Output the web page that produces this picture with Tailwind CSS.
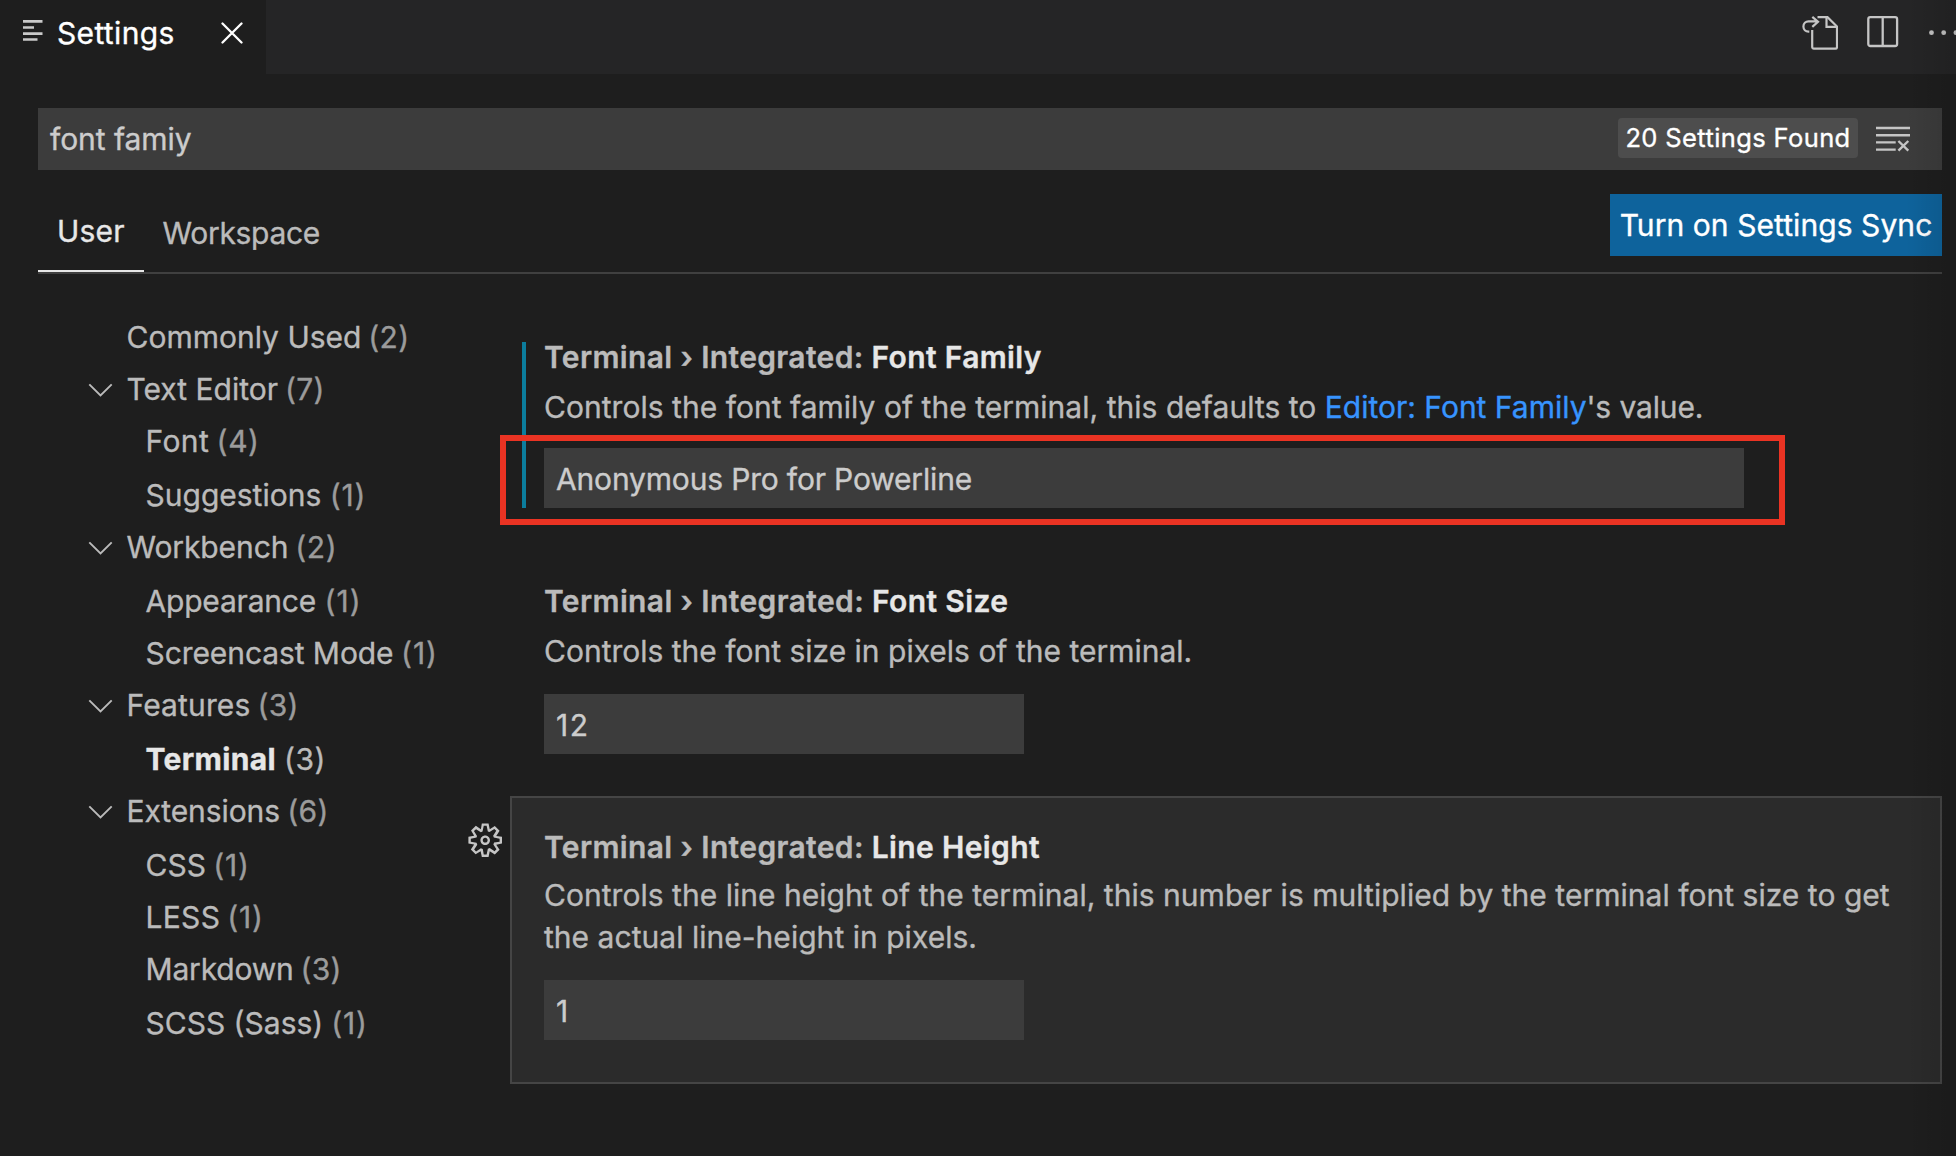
<!DOCTYPE html>
<html lang="en">
<head>
<meta charset="utf-8">
<title>Settings</title>
<script src="https://cdn.jsdelivr.net/npm/@tailwindcss/browser@4"></script>
</head>
<body class="relative flex h-[1156px] w-[1956px] flex-col overflow-hidden bg-[#1e1e1e] font-['Inter',sans-serif] text-[30px] leading-[42px] text-[#bbbbbb] [-webkit-text-stroke:0.35px]">

  <!-- Tab bar -->
  <header class="flex h-[74px] shrink-0 bg-[#252526]">
    <div class="flex h-full w-[266px] items-start bg-[#1e1e1e] text-white">
      <svg class="mt-[20px] ml-[23px] h-[22px] w-[20px] shrink-0" viewBox="0 0 20 22" fill="#c9c9c9"><path d="M0 0h19.5v2.8H0zM0 6.2h11v2.6H0zM0 12.2h19.5V15H0zM0 18.2h14.5v2.6H0z"/></svg>
      <span class="ml-[14px] leading-[66px] tracking-[0.35px]">Settings</span>
      <svg class="mt-[22px] ml-[46.5px] h-[22px] w-[22px]" viewBox="0 0 22 22" fill="none" stroke="#fff" stroke-width="2.3" stroke-linecap="round"><path d="M1.500 1.500l19 19M20.500 1.500l-19 19"/></svg>
    </div>
    <div class="flex flex-1 justify-end">
      <svg class="mt-[14px] h-[38px] w-[38px]" viewBox="0 0 38 38" fill="none" stroke="#c5c5c5" stroke-width="2.2"><path d="M17.500 3.200H27.500L37 12.500V33a1.700 1.700 0 0 1-1.700 1.700H13.900a1.700 1.700 0 0 1-1.700-1.700V16"/><path d="M26.500 3.200V12.800H37"/><path d="M9.300 17.600H8.500a5.100 5.100 0 0 1 0-10.200H17.500M12.300 2.800l5.700 4.900-5.700 5.200"/></svg>
      <svg class="mt-[15px] ml-[28px] h-[34px] w-[34px]" viewBox="0 0 34 34" fill="none" stroke="#c5c5c5" stroke-width="2.3"><rect x="2.300" y="2.200" width="28.800" height="28.800" rx="2"/><path d="M16.700 2v29"/></svg>
      <svg class="mt-[28px] ml-[28px] h-[10px] w-[28px]" viewBox="0 0 28 10" fill="#c5c5c5"><circle cx="3.500" cy="4.700" r="2.400"/><circle cx="15.700" cy="4.700" r="2.400"/><circle cx="27.900" cy="4.700" r="2.400"/></svg>
    </div>
  </header>

  <!-- Search box -->
  <div class="mt-[34px] mr-[14px] ml-[38px] flex h-[62px] shrink-0 items-center bg-[#3c3c3c] pl-[12px] text-[#cccccc]">
    <span class="flex-1 tracking-[-0.05px]">font famiy</span>
    <span class="mb-[2px] flex h-[40px] w-[240px] items-center justify-center rounded bg-[#4d4d4d] text-[25.5px] leading-[40px] tracking-[0.38px] text-white">20 Settings Found</span>
    <svg class="mr-[32px] ml-[18px] h-[26px] w-[34px]" viewBox="0 0 34 26" fill="none" stroke="#c5c5c5" stroke-width="2.400"><path d="M0 2h34M0 9.200h34M0 16.400h19.700M0 23.600h19.700M22.400 15l9.900 9.600M32.300 15l-9.900 9.600"/></svg>
  </div>

  <!-- Scope tabs -->
  <div class="mr-[14px] ml-[38px] flex h-[104px] shrink-0 items-start border-b-2 border-[#404040]">
    <div class="h-full w-[106px] border-b-2 border-[#e7e7e7] pt-[40px] pl-[19px] tracking-[0.2px] text-[#e7e7e7]">User</div>
    <div class="flex-1 pt-[42px] pl-[18.5px] tracking-[-0.3px]">Workspace</div>
    <button class="mt-[24px] h-[62px] w-[332px] bg-[#0e639c] text-center tracking-[0.07px] text-white">Turn on Settings Sync</button>
  </div>

  <main class="flex min-h-0 flex-1">
    <!-- Category tree -->
    <nav class="w-[510px] shrink-0 pt-[37px] pl-[88px] leading-[52px]">
      <div class="h-[52px] pl-[38.5px]">Commonly Used <span class="-ml-[1.5px] tracking-[0.3px] text-[#9b9b9b]">(2)</span></div>
      <div class="flex h-[52px]"><svg class="mt-[20px] mr-[13.5px] h-[14px] w-[25px]" viewBox="0 0 25 14" fill="none" stroke="#bbb" stroke-width="1.900"><path d="M1.300 1.300l11.200 11.200L23.700 1.300"/></svg><span>Text Editor <span class="-ml-[1.5px] tracking-[0.3px] text-[#9b9b9b]">(7)</span></span></div>
      <div class="h-[54px] pl-[57.5px]"><span class="tracking-[0.4px]">Font</span> <span class="-ml-px tracking-[0.6px] text-[#9b9b9b]">(4)</span></div>
      <div class="h-[52px] pl-[57.5px]">Suggestions <span class="tracking-[0.8px] text-[#9b9b9b]">(1)</span></div>
      <div class="flex h-[54px]"><svg class="mt-[20px] mr-[13.5px] h-[14px] w-[25px]" viewBox="0 0 25 14" fill="none" stroke="#bbb" stroke-width="1.900"><path d="M1.300 1.300l11.200 11.200L23.700 1.300"/></svg><span><span class="tracking-[-0.1px]">Workbench</span> <span class="-ml-[1.5px] tracking-[0.6px] text-[#9b9b9b]">(2)</span></span></div>
      <div class="h-[52px] pl-[57.5px]"><span class="tracking-[-0.2px]">Appearance</span> <span class="tracking-[1px] text-[#9b9b9b]">(1)</span></div>
      <div class="h-[52px] pl-[57.5px]"><span class="tracking-[-0.08px]">Screencast Mode</span> <span class="-ml-px tracking-[1px] text-[#9b9b9b]">(1)</span></div>
      <div class="flex h-[54px]"><svg class="mt-[20px] mr-[13.5px] h-[14px] w-[25px]" viewBox="0 0 25 14" fill="none" stroke="#bbb" stroke-width="1.900"><path d="M1.300 1.300l11.200 11.200L23.700 1.300"/></svg><span><span class="tracking-[0.14px]">Features</span> <span class="-ml-[1.5px] tracking-[0.3px] text-[#9b9b9b]">(3)</span></span></div>
      <div class="h-[52px] pl-[57.5px]"><span class="font-bold tracking-[0.34px] text-[#e7e7e7]">Terminal</span> <span class="-ml-[0.5px] tracking-[0.6px] text-[#bbbbbb]">(3)</span></div>
      <div class="flex h-[54px]"><svg class="mt-[20px] mr-[13.5px] h-[14px] w-[25px]" viewBox="0 0 25 14" fill="none" stroke="#bbb" stroke-width="1.900"><path d="M1.300 1.300l11.200 11.200L23.700 1.300"/></svg><span><span class="tracking-[-0.1px]">Extensions</span> <span class="-ml-px tracking-[0.3px] text-[#9b9b9b]">(6)</span></span></div>
      <div class="h-[52px] pl-[57.5px]">CSS <span class="-ml-px tracking-[0.8px] text-[#9b9b9b]">(1)</span></div>
      <div class="h-[52px] pl-[57.5px]"><span class="tracking-[0.3px]">LESS</span> <span class="-ml-[1.5px] tracking-[0.8px] text-[#9b9b9b]">(1)</span></div>
      <div class="h-[54px] pl-[57.5px]"><span class="tracking-[-0.19px]">Markdown</span> <span class="-ml-[1.5px] tracking-[0.3px] text-[#9b9b9b]">(3)</span></div>
      <div class="h-[52px] pl-[57.5px]">SCSS (Sass) <span class="-ml-[0.5px] tracking-[0.8px] text-[#9b9b9b]">(1)</span></div>
    </nav>

    <!-- Settings list -->
    <div class="mr-[14px] flex flex-1 flex-col pt-[62px]">
      <section class="relative pl-[34px]">
        <div class="absolute top-[6px] bottom-0 left-[12px] w-[4px] bg-[#0c7d9d]"></div>
        <h3 class="font-semibold tracking-[0.35px]">Terminal › Integrated: <span class="text-[#e7e7e7]">Font Family</span></h3>
        <p class="mt-[8px]"><span class="tracking-[0.03px]">Controls the font family of the terminal, this defaults to </span><a class="text-[#3794ff]">Editor: Font Family</a><span class="tracking-[-0.12px]">'s value.</span></p>
        <div class="mt-[20px] h-[60px] w-[1200px] bg-[#3c3c3c] pl-[12px] leading-[62px] tracking-[-0.17px] text-[#cccccc]">Anonymous Pro for Powerline</div>
        <!-- Annotation frame around the value -->
        <div class="absolute top-[99px] left-[-10px] h-[90px] w-[1285px] border-[6px] border-[#ea3323]"></div>
      </section>

      <section class="mt-[72px] pl-[34px]">
        <h3 class="font-semibold tracking-[0.37px]">Terminal › Integrated: <span class="text-[#e7e7e7]">Font Size</span></h3>
        <p class="mt-[8px]">Controls the font size in pixels of the terminal.</p>
        <div class="mt-[22px] h-[60px] w-[480px] bg-[#3c3c3c] pl-[12px] leading-[62px] tracking-[1.5px] text-[#cccccc]">12</div>
      </section>

      <section class="relative mt-[42px] h-[288px] border-2 border-[#454545] bg-[#2b2b2b] pt-[28px] pl-[32px]">
        <svg class="absolute top-[23px] left-[-46.5px] h-[38.400px] w-[38.400px]" viewBox="0 0 16 16" fill="#c5c5c5" fill-rule="evenodd"><path d="M9.100 4.400L8.600 2H7.400l-.5 2.400-.7.300-2-1.300-.9.800 1.300 2-.2.700-2.400.5v1.200l2.400.5.300.8-1.300 2 .8.800 2-1.300.8.300.4 2.300h1.200l.5-2.400.8-.3 2 1.300.8-.8-1.300-2 .3-.8 2.300-.4V7.400l-2.400-.5-.3-.8 1.300-2-.8-.8-2 1.300-.7-.2zM9.400 1l.5 2.400L12 2.100l2 2-1.400 2.100 2.400.4v2.800l-2.400.5L14 12l-2 2-2.100-1.400-.5 2.400H6.600l-.5-2.400L4 13.900l-2-2 1.400-2.100L1 9.400V6.600l2.400-.5L2.100 4l2-2 2.100 1.400.4-2.400h2.800zm.6 7c0 1.100-.9 2-2 2s-2-.9-2-2 .9-2 2-2 2 .9 2 2zM8 9c.6 0 1-.4 1-1s-.4-1-1-1-1 .4-1 1 .4 1 1 1z"/></svg>
        <h3 class="font-semibold tracking-[0.36px]">Terminal › Integrated: <span class="text-[#e7e7e7]">Line Height</span></h3>
        <p class="mt-[6px] w-[1360px] tracking-[0.03px]">Controls the line height of the terminal, this number is multiplied by the terminal font size to get the actual line-height in pixels.</p>
        <div class="mt-[22px] h-[60px] w-[480px] bg-[#3c3c3c] pl-[12px] leading-[62px] text-[#cccccc]">1</div>
      </section>
    </div>
  </main>

  <!-- Edge shading -->
  <div class="pointer-events-none absolute inset-y-0 right-0 w-[50px] bg-linear-to-r from-black/0 to-black/12"></div>
</body>
</html>
